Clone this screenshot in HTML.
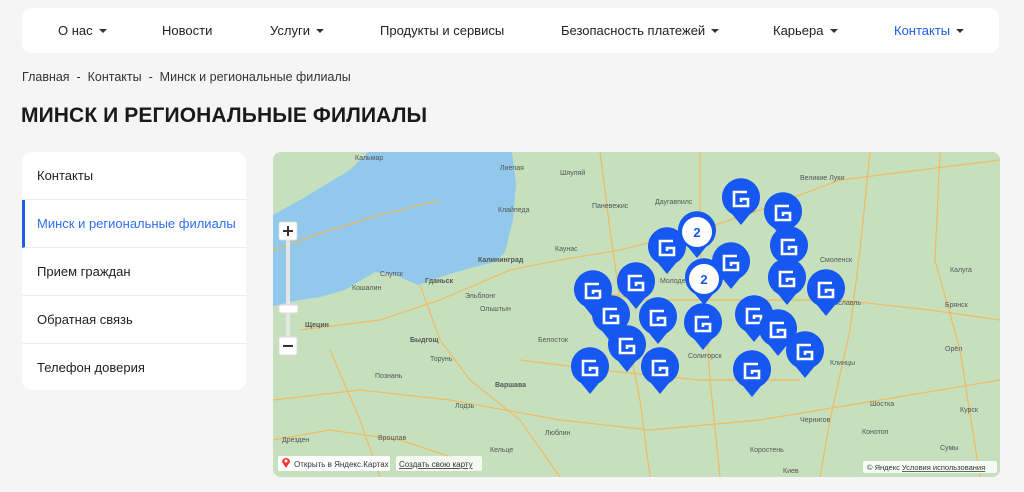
<!DOCTYPE html>
<html><head><meta charset="utf-8"><style>
*{margin:0;padding:0;box-sizing:border-box}
body{width:1024px;height:492px;background:#f5f5f5;font-family:"Liberation Sans",sans-serif;color:#222;overflow:hidden;position:relative}
.nav{position:absolute;left:22px;top:8px;width:977px;height:45px;background:#fff;border-radius:10px}
.nav span{position:absolute;top:15px;font-size:13px;color:#222;white-space:nowrap}
.nav span.c{color:#1b5ce8}
.car{display:inline-block;width:0;height:0;border-left:4px solid transparent;border-right:4px solid transparent;border-top:4px solid #333;margin-left:6px;vertical-align:2px}
.bc{position:absolute;left:22px;top:70px;font-size:12.5px;color:#333}
h1{position:absolute;left:21px;top:104px;font-size:21px;font-weight:bold;color:#1a1a1a;letter-spacing:0.1px}
.side{position:absolute;left:22px;top:152px;width:224px;height:238px;background:#fff;border-radius:10px;overflow:hidden}
.side div{height:48px;border-bottom:1px solid #eee;padding-left:15px;line-height:47px;font-size:13px;color:#222}
.side div.a{color:#2f6ff0;border-left:3px solid #1b5ce8;padding-left:12px}
.side div:last-child{border:none}
.map{position:absolute;left:273px;top:152px;width:727px;height:325px;border-radius:8px;overflow:hidden;background:#c6e0bd}
</style></head><body>
<div class="nav">
<span style="left:36px">О нас<i class="car"></i></span>
<span style="left:140px">Новости</span>
<span style="left:248px">Услуги<i class="car"></i></span>
<span style="left:358px">Продукты и сервисы</span>
<span style="left:539px">Безопасность платежей<i class="car"></i></span>
<span style="left:751px">Карьера<i class="car"></i></span>
<span class="c" style="left:872px">Контакты<i class="car"></i></span>
</div>
<div class="bc">Главная &nbsp;-&nbsp; Контакты &nbsp;-&nbsp; Минск и региональные филиалы</div>
<h1>МИНСК И РЕГИОНАЛЬНЫЕ ФИЛИАЛЫ</h1>
<div class="side">
<div>Контакты</div>
<div class="a">Минск и региональные филиалы</div>
<div>Прием граждан</div>
<div>Обратная связь</div>
<div>Телефон доверия</div>
</div>
<div class="map">
<svg width="727" height="325" viewBox="273 152 727 325" xmlns="http://www.w3.org/2000/svg" font-family="Liberation Sans, sans-serif">
<defs>
<g id="m"><path d="M0,26 L-9,15 A19,19 0 1 1 9,15 Z" fill="#1557f0"/><path d="M6,-7 H-7 V7 H7 V0 H0 V3" fill="none" stroke="#fff" stroke-width="2.6"/></g>
<g id="k"><path d="M0,26 L-9,15 A19,19 0 1 1 9,15 Z" fill="#1557f0"/><circle r="15" fill="#fff"/><text y="5" text-anchor="middle" font-size="13" font-weight="bold" fill="#1557f0">2</text></g>
</defs>
<rect x="273" y="152" width="727" height="325" fill="#c6e0bd"/>
<path d="M368,152 L512,152 L516,185 L513,220 L505,252 L495,262 L470,268 L440,277 L418,285 L395,275 L375,272 L345,290 L320,297 L300,300 L273,306 L273,215 L300,200 L325,185 L350,170 Z" fill="#91c8ec"/>
<g fill="none" stroke="#f5b453" stroke-width="1.2" opacity="0.85">
<path d="M273,250 L330,230 L380,215 L440,200"/><path d="M300,330 L380,320 L440,300 L510,270 L560,260 L620,250 L700,230 L760,210 L840,180 L1000,160"/>
<path d="M420,285 L440,340 L470,380 L520,420 L560,477"/><path d="M273,400 L360,390 L450,400 L560,420 L650,430 L760,420 L880,400 L1000,380"/>
<path d="M590,290 L640,300 L700,300 L780,300 L840,300 L930,310 L1000,320"/><path d="M520,360 L600,370 L700,380 L800,380"/>
<path d="M700,152 L700,250 L705,300 L710,380 L720,477"/><path d="M870,152 L860,250 L850,330 L830,420 L820,477"/>
<path d="M600,152 L610,230 L620,300 L640,400 L650,477"/><path d="M940,152 L935,260 L960,350 L980,477"/>
<path d="M330,350 L360,420 L380,477"/><path d="M273,440 L330,430 L400,440 L460,460"/>
</g>
<g fill="#555" font-size="7">
<text x="355" y="160">Кальмар</text><text x="500" y="170">Лиепая</text><text x="498" y="212">Клайпеда</text>
<text x="478" y="262" font-weight="bold">Калининград</text><text x="380" y="276">Слупск</text><text x="425" y="283" font-weight="bold">Гданьск</text>
<text x="352" y="290">Кошалин</text><text x="465" y="298">Эльблонг</text><text x="480" y="311">Ольштын</text>
<text x="305" y="327" font-weight="bold">Щецин</text><text x="410" y="342" font-weight="bold">Быдгощ</text><text x="430" y="361">Торунь</text>
<text x="375" y="378">Познань</text><text x="495" y="387" font-weight="bold">Варшава</text><text x="455" y="408">Лодзь</text>
<text x="378" y="440">Вроцлав</text><text x="282" y="442">Дрезден</text><text x="490" y="452">Кельце</text><text x="545" y="435">Люблин</text>
<text x="538" y="342">Белосток</text><text x="560" y="175">Шяуляй</text><text x="592" y="208">Паневежис</text><text x="555" y="251">Каунас</text>
<text x="655" y="204">Даугавпилс</text><text x="660" y="283">Молодечно</text><text x="690" y="320">Минск</text><text x="688" y="358">Солигорск</text>
<text x="945" y="307">Брянск</text><text x="945" y="351">Орёл</text><text x="960" y="412">Курск</text><text x="940" y="450">Сумы</text>
<text x="800" y="422">Чернигов</text><text x="862" y="434">Конотоп</text><text x="750" y="452">Коростень</text><text x="783" y="473">Киев</text>
<text x="830" y="365">Клинцы</text><text x="870" y="406">Шостка</text><text x="820" y="262">Смоленск</text><text x="950" y="272">Калуга</text>
<text x="800" y="180">Великие Луки</text><text x="830" y="305">Рославль</text>
</g>
<g transform="translate(741,199)"><use href="#m"/></g>
<g transform="translate(783,213)"><use href="#m"/></g>
<g transform="translate(789,247)"><use href="#m"/></g>
<g transform="translate(667,248)"><use href="#m"/></g>
<g transform="translate(731,263)"><use href="#m"/></g>
<g transform="translate(636,283)"><use href="#m"/></g>
<g transform="translate(787,279)"><use href="#m"/></g>
<g transform="translate(826,290)"><use href="#m"/></g>
<g transform="translate(593,291)"><use href="#m"/></g>
<g transform="translate(611,316)"><use href="#m"/></g>
<g transform="translate(658,318)"><use href="#m"/></g>
<g transform="translate(703,324)"><use href="#m"/></g>
<g transform="translate(754,316)"><use href="#m"/></g>
<g transform="translate(778,330)"><use href="#m"/></g>
<g transform="translate(627,346)"><use href="#m"/></g>
<g transform="translate(805,352)"><use href="#m"/></g>
<g transform="translate(590,368)"><use href="#m"/></g>
<g transform="translate(660,368)"><use href="#m"/></g>
<g transform="translate(752,371)"><use href="#m"/></g>
<g transform="translate(697,232)"><use href="#k"/></g>
<g transform="translate(704,279)"><use href="#k"/></g>
<rect x="279" y="222" width="18" height="18" rx="2" fill="#fff" stroke="#ddd"/>
<path d="M288,226 V236 M283,231 H293" stroke="#333" stroke-width="2"/>
<rect x="286" y="240" width="4" height="97" fill="#e6e6e6"/>
<rect x="279" y="305" width="19" height="8" rx="2" fill="#fff" stroke="#ddd"/>
<rect x="279" y="337" width="18" height="18" rx="2" fill="#fff" stroke="#ddd"/>
<path d="M283,346 H293" stroke="#333" stroke-width="2"/>
<rect x="278" y="456" width="112" height="15" rx="2" fill="#fff"/>
<path d="M286,468 L282,462 A4,4 0 1 1 290,462 Z" fill="#f33"/><circle cx="286" cy="461" r="1.5" fill="#fff"/>
<text x="294" y="467" font-size="8" fill="#333">Открыть в Яндекс.Картах</text>
<rect x="396" y="456" width="86" height="15" rx="2" fill="#fff" opacity="0.8"/>
<text x="399" y="467" font-size="8" fill="#333" text-decoration="underline">Создать свою карту</text>
<rect x="863" y="461" width="134" height="12" rx="2" fill="#fff" opacity="0.85"/>
<text x="867" y="470" font-size="7.5" fill="#333">© Яндекс <tspan text-decoration="underline">Условия использования</tspan></text>
</svg>
</div>
</body></html>
